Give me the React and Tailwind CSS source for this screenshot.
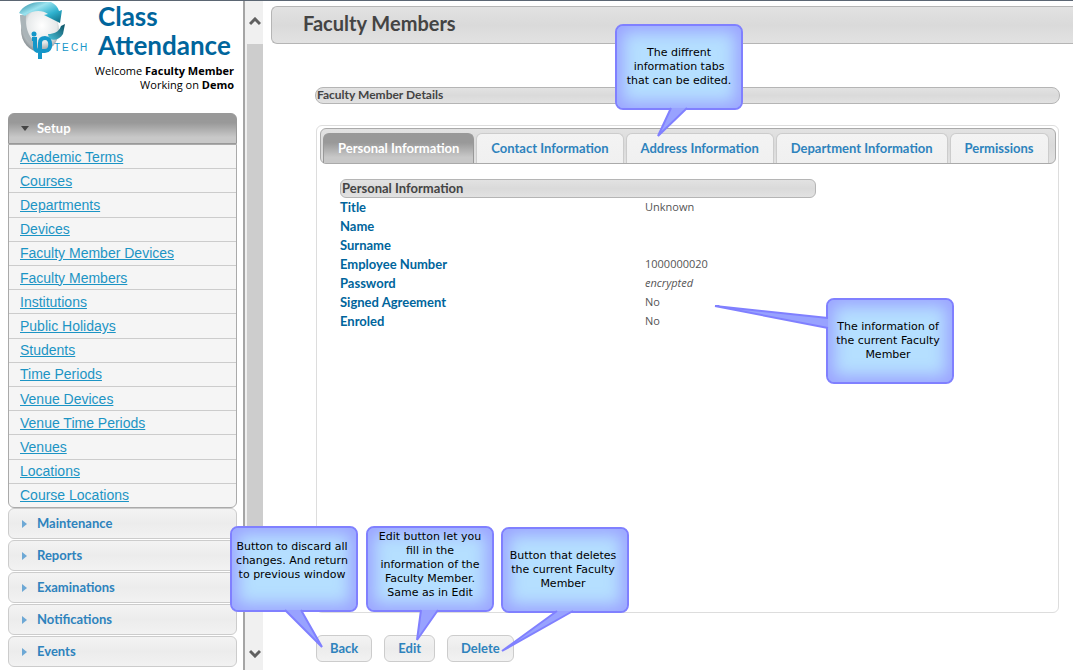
const setupLinks = [
  "Academic Terms",
  "Courses",
  "Departments",
  "Devices",
  "Faculty Member Devices",
  "Faculty Members",
  "Institutions",
  "Public Holidays",
  "Students",
  "Time Periods",
  "Venue Devices",
  "Venue Time Periods",
  "Venues",
  "Locations",
  "Course Locations",
];

const closedSections = [
  "Maintenance",
  "Reports",
  "Examinations",
  "Notifications",
  "Events",
];

const tabs = [
  "Personal Information",
  "Contact Information",
  "Address Information",
  "Department Information",
  "Permissions",
];

const details = [
  { label: "Title", value: "Unknown" },
  { label: "Name", value: "" },
  { label: "Surname", value: "" },
  { label: "Employee Number", value: "1000000020" },
  { label: "Password", value: "encrypted", italic: true },
  { label: "Signed Agreement", value: "No" },
  { label: "Enroled", value: "No" },
];

// tail points are relative to the top left corner of the bubble
const callouts = [
  {
    text: "The diffrent information tabs that can be edited.",
    position: "left-[615px] top-[23px] px-2",
    tail: "56,84 43,112 72,84",
  },
  {
    text: "The information of the current Faculty Member",
    position: "left-[826px] top-[297px] pl-1 pr-2",
    tail: "2,20 -111,8 2,30",
  },
  {
    text: "Button to discard all changes. And return to previous window",
    position: "left-[230px] top-[525px] pb-4 pr-1",
    tail: "55,84 92,121 71,84",
  },
  {
    text: "Edit button let you fill in the information of the Faculty Member. Same as in Edit",
    position: "left-[366px] top-[525px] px-2 pb-2",
    tail: "55,84 51,114 72,84",
  },
  {
    text: "Button that deletes the current Faculty Member",
    position: "left-[501px] top-[526px] pl-1 pr-2",
    tail: "56,84 1,124 72,84",
  },
];

function Logo() {
  return (
    <svg viewBox="0 0 72 60" className="h-[60px] w-[72px] shrink-0" role="img" aria-label="IP Tech">
      <defs>
        <radialGradient id="globe" cx="0.55" cy="0.4" r="0.6">
          <stop offset="0" stopColor="#ffffff" />
          <stop offset="0.65" stopColor="#e6e9ea" />
          <stop offset="1" stopColor="#8b9498" />
        </radialGradient>
        <linearGradient id="ribbon" x1="0" y1="0" x2="1" y2="1">
          <stop offset="0" stopColor="#1b7f98" />
          <stop offset="0.35" stopColor="#9be2ee" />
          <stop offset="0.65" stopColor="#2fb2cf" />
          <stop offset="1" stopColor="#0c667d" />
        </linearGradient>
        <linearGradient id="fold" x1="0" y1="1" x2="1" y2="0">
          <stop offset="0" stopColor="#4cc3db" />
          <stop offset="1" stopColor="#0a4e61" />
        </linearGradient>
      </defs>
      <ellipse cx="22" cy="29" rx="19" ry="22" fill="url(#globe)" />
      <path d="M2 14C2 28 7 39 16 46L17 41C10 35 7 26 8 14Z" fill="#aab4b8" />
      <path
        d="M1 12C5 5 13 1 22 1L33 1C37 3 40 6 41 10L44 9L42 22L26 14L30 13C26 10 20 9 14 11C11 12 9 13 7 15Z"
        fill="url(#ribbon)"
      />
      <path d="M47 23L45 33C42 38 37 40 31 38L30 33C36 33 41 31 43 25Z" fill="url(#fold)" />
      <circle cx="16" cy="33" r="2.500" fill="#1496c8" />
      <path
        d="M14 38H17V46C17 49 19 50 21 50M22 58V42C22 38 24 37 27 37C34 37 34 50 27 50H22"
        fill="none"
        stroke="#1496c8"
        strokeWidth="4"
      />
      <text x="36 44 53 62" y="50" fontSize="10" fontFamily="Liberation Sans, sans-serif" fill="#1496c8">
        TECH
      </text>
    </svg>
  );
}

function Chevron({ d }) {
  return (
    <svg viewBox="0 0 12 9" className="h-[9px] w-3 shrink-0" fill="none" stroke="#606060" strokeWidth="3">
      <path d={d} />
    </svg>
  );
}

function Callout({ text, position, tail }) {
  return (
    <div
      className={`absolute z-10 flex h-[86px] w-32 items-center justify-center rounded-lg border-2 border-[#8080ff] bg-[#b5dfff] text-center font-['DejaVu_Sans',sans-serif] text-[11px] leading-[14px] text-black shadow-[inset_0_0_16px_6px_#9ba4ff] ${position}`}
    >
      <svg viewBox="0 0 128 86" className="absolute -left-0.5 -top-0.5 h-[86px] w-32 overflow-visible" aria-hidden="true">
        <polyline points={tail} fill="#98a2ff" stroke="#8080ff" strokeWidth="2" />
      </svg>
      <p className="relative">{text}</p>
    </div>
  );
}

function Sidebar() {
  return (
    <aside className="w-[243px] shrink-0 pl-2 pr-1.5">
      <div className="flex items-start gap-2 pl-2.5">
        <Logo />
        <h2 className="pt-px text-[26px] font-bold leading-[29px] text-[#00659c]">
          Class Attendance
        </h2>
      </div>

      <p className="pr-[3px] pt-[3px] text-right font-['Open_Sans',sans-serif] text-[11px] leading-[14px] text-black">
        Welcome <b>Faculty Member</b>
        <br />
        Working on <b>Demo</b>
      </p>

      <nav className="pt-[21px]">
        <button
          type="button"
          className="flex h-[31px] w-full items-center gap-2 rounded-t-md border border-[#999] bg-linear-to-b from-[#999] from-30% to-[#c8c8c8] to-80% pl-3 text-[13px] font-bold text-white"
        >
          <svg viewBox="0 0 8 5" className="h-[5px] w-2" aria-hidden="true">
            <path d="M0 0H8L4 5Z" fill="#454545" />
          </svg>
          Setup
        </button>

        <ul className="flex min-h-[364px] flex-col rounded-b-md border border-[#aaa] bg-[#f5f5f5] font-['Liberation_Sans',sans-serif] text-sm">
          {setupLinks.map((link) => (
            <li
              key={link}
              className="flex flex-1 items-center border-b border-[#ccc] pl-[11px] last:border-b-0"
            >
              <a href="#" className="text-[#1c94c4] underline">
                {link}
              </a>
            </li>
          ))}
        </ul>

        {closedSections.map((section) => (
          <button
            key={section}
            type="button"
            className="mb-px flex h-[31px] w-full items-center gap-2.5 rounded-md border border-[#ccc] bg-linear-to-b from-[#f3f3f3] via-[#ececec] to-[#f2f2f2] pl-[13px] text-[13px] font-bold text-[#2e83bd]"
          >
            <svg viewBox="0 0 5 8" className="h-2 w-[5px]" aria-hidden="true">
              <path d="M0 0V8L5 4Z" fill="#6da8d5" />
            </svg>
            {section}
          </button>
        ))}
      </nav>
    </aside>
  );
}

function Scrollbar() {
  return (
    <div
      aria-hidden="true"
      className="flex w-5 shrink-0 flex-col items-center border-l-2 border-[#a5a5a5] bg-[#f0f0f0] pb-3 pl-0.5 pt-4"
    >
      <Chevron d="M1 7L6 2L11 7" />
      <div className="mt-[18px] w-4 flex-1 bg-[#cdcdcd]" />
      <div className="h-[72px] shrink-0" />
      <Chevron d="M1 2L6 7L11 2" />
    </div>
  );
}

export default function App() {
  return (
    <div className="relative flex min-h-screen overflow-hidden border-t border-[#5b6673] bg-white font-['Lato',sans-serif] text-[#444]">
      <Sidebar />
      <Scrollbar />

      <main className="min-w-0 flex-1 pl-2 pt-[5px]">
        <h1 className="h-[38px] rounded-l-md border border-r-0 border-[#b5b5b5] bg-linear-to-b from-[#e2e2e2] via-[#dadada] to-[#e2e2e2] pl-[31px] text-xl font-bold leading-8">
          Faculty Members
        </h1>

        <section className="pl-11 pr-[13px] pt-[43px]">
          <h2 className="h-[17px] rounded-lg border border-[#b5b5b5] bg-linear-to-b from-[#e2e2e2] via-[#dadada] to-[#e2e2e2] pl-px text-[12px] font-bold leading-[14px]">
            Faculty Member Details
          </h2>

          <div className="mx-px mt-[21px] h-[488px] rounded-md border border-[#ddd] pl-[3px] pr-0.5 pt-0.5">
            <div
              role="tablist"
              className="flex h-9 items-end gap-0.5 rounded-md border border-[#aaa] bg-linear-to-b from-[#e2e2e2] via-[#dadada] to-[#e2e2e2] pl-0.5"
            >
              {tabs.map((tab, index) => (
                <button
                  key={tab}
                  type="button"
                  role="tab"
                  aria-selected={index === 0}
                  className={`h-[30px] whitespace-nowrap rounded-t-md border border-b-0 px-3.5 text-[13px] font-bold ${
                    index === 0
                      ? "border-[#999] bg-linear-to-b from-[#999] from-30% to-[#c8c8c8] to-80% text-white"
                      : "border-[#ccc] bg-linear-to-b from-[#f3f3f3] to-[#f0f0f0] text-[#2e83bd]"
                  }`}
                >
                  {tab}
                </button>
              ))}
            </div>

            <div className="pl-5 pt-[15px]">
              <h3 className="h-[19px] w-[476px] rounded-md border border-[#b5b5b5] bg-linear-to-b from-[#e2e2e2] via-[#dadada] to-[#e2e2e2] pl-px text-[13px] font-bold leading-[17px]">
                Personal Information
              </h3>

              <dl>
                {details.map((row) => (
                  <div key={row.label} className="flex h-[19px] items-center">
                    <dt className="w-[305px] text-[13px] font-bold text-[#00659c]">
                      {row.label}
                    </dt>
                    <dd
                      className={`font-['Open_Sans',sans-serif] text-[11px] text-[#555] ${row.italic ? "italic" : ""}`}
                    >
                      {row.value}
                    </dd>
                  </div>
                ))}
              </dl>
            </div>
          </div>

          <div className="ml-px mt-[22px] flex gap-3">
            {["Back", "Edit", "Delete"].map((action) => (
              <button
                key={action}
                type="button"
                className="h-[27px] rounded-md border border-[#ccc] bg-linear-to-b from-[#f3f3f3] via-[#ececec] to-[#f2f2f2] px-[13px] text-[13px] font-bold text-[#2e83bd]"
              >
                {action}
              </button>
            ))}
          </div>
        </section>
      </main>

      {callouts.map((callout) => (
        <Callout key={callout.text} {...callout} />
      ))}
    </div>
  );
}
